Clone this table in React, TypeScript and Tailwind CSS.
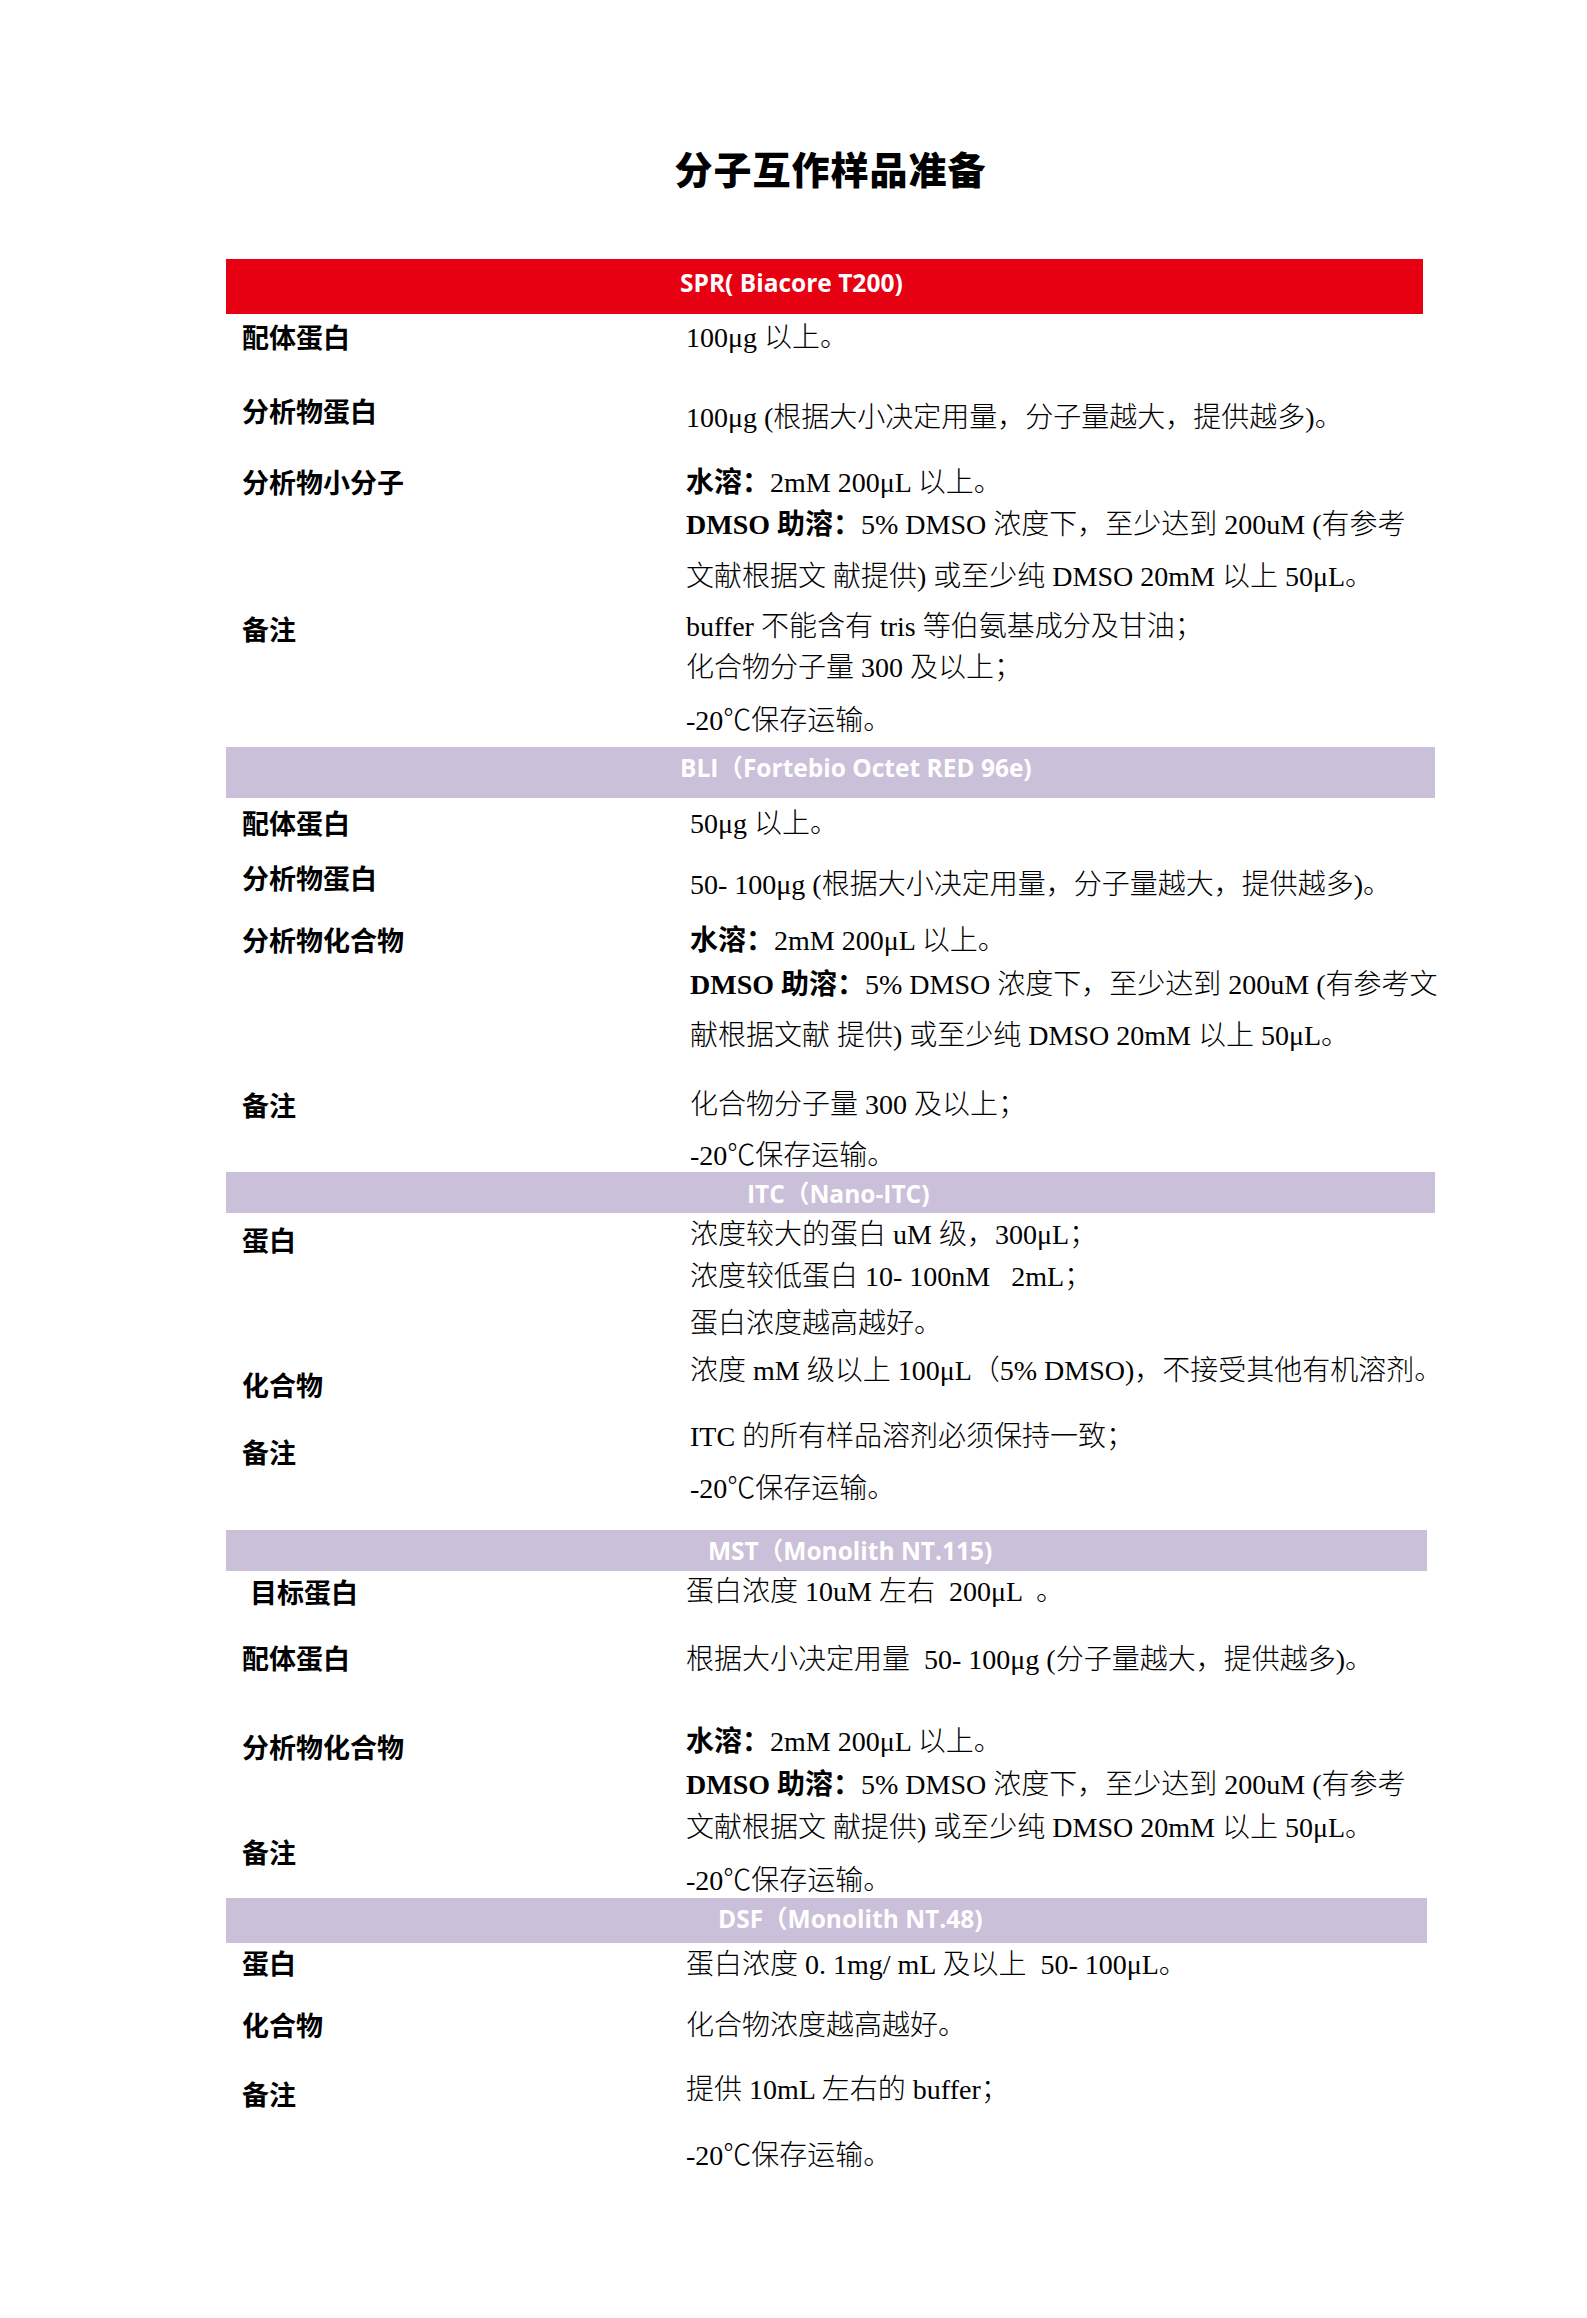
import React from "react";

type Label = { cls: string; text: string };
type Val = { cls: string; node: React.ReactNode };
type Section = {
  title: string;
  barCls: string;
  textCls: string;
  bodyCls: string;
  gridCls: string;
  labels: Label[];
  values: Val[];
};

const B = ({ children }: { children: React.ReactNode }) => (
  <span className="font-bold">{children}</span>
);

const sections: Section[] = [
  {
    title: "SPR( Biacore T200)",
    barCls: "h-[55px] w-[1197px] bg-[#e60012]",
    textCls: "pl-[454px] pb-[7px]",
    bodyCls: "h-[433px]",
    gridCls: "grid-cols-[460px_1fr]",
    labels: [
      { cls: "mt-[7px]", text: "配体蛋白" },
      { cls: "mt-[42px]", text: "分析物蛋白" },
      { cls: "mt-[39px]", text: "分析物小分子" },
      { cls: "mt-[115px]", text: "备注" },
    ],
    values: [
      { cls: "mt-[8px]", node: "100μg 以上。" },
      { cls: "mt-[48px]", node: "100μg (根据大小决定用量，分子量越大，提供越多)。" },
      { cls: "mt-[33px]", node: <><B>水溶：</B>2mM 200μL 以上。</> },
      { cls: "mt-[10px]", node: <><B>DMSO 助溶：</B>5% DMSO 浓度下，至少达到 200uM (有参考</> },
      { cls: "mt-[20px]", node: "文献根据文 献提供) 或至少纯 DMSO 20mM 以上 50μL。" },
      { cls: "mt-[18px]", node: "buffer 不能含有 tris 等伯氨基成分及甘油；" },
      { cls: "mt-[9px]", node: "化合物分子量 300 及以上；" },
      { cls: "mt-[21px]", node: "-20℃保存运输。" },
    ],
  },
  {
    title: "BLI（Fortebio Octet RED 96e)",
    barCls: "h-[51px] w-[1209px] bg-[#cbc0d9]",
    textCls: "pl-[454px] pb-[10px]",
    bodyCls: "h-[374px]",
    gridCls: "grid-cols-[464px_1fr]",
    labels: [
      { cls: "mt-[9px]", text: "配体蛋白" },
      { cls: "mt-[23px]", text: "分析物蛋白" },
      { cls: "mt-[30px]", text: "分析物化合物" },
      { cls: "mt-[133px]", text: "备注" },
    ],
    values: [
      { cls: "mt-[10px]", node: "50μg 以上。" },
      { cls: "mt-[29px]", node: "50- 100μg (根据大小决定用量，分子量越大，提供越多)。" },
      { cls: "mt-[24px]", node: <><B>水溶：</B>2mM 200μL 以上。</> },
      { cls: "mt-[12px]", node: <><B>DMSO 助溶：</B>5% DMSO 浓度下，至少达到 200uM (有参考文</> },
      { cls: "mt-[19px]", node: "献根据文献 提供) 或至少纯 DMSO 20mM 以上 50μL。" },
      { cls: "mt-[37px]", node: "化合物分子量 300 及以上；" },
      { cls: "mt-[19px]", node: "-20℃保存运输。" },
    ],
  },
  {
    title: "ITC（Nano-ITC)",
    barCls: "h-[41px] w-[1209px] bg-[#cbc0d9]",
    textCls: "pl-[521px] pt-[3px]",
    bodyCls: "h-[317px]",
    gridCls: "grid-cols-[464px_1fr]",
    labels: [
      { cls: "mt-[11px]", text: "蛋白" },
      { cls: "mt-[113px]", text: "化合物" },
      { cls: "mt-[35px]", text: "备注" },
    ],
    values: [
      { cls: "mt-[6px]", node: "浓度较大的蛋白 uM 级，300μL；" },
      { cls: "mt-[10px]", node: "浓度较低蛋白 10- 100nM   2mL；" },
      { cls: "mt-[15px]", node: "蛋白浓度越高越好。" },
      { cls: "mt-[15px]", node: "浓度 mM 级以上 100μL（5% DMSO)，不接受其他有机溶剂。" },
      { cls: "mt-[34px]", node: "ITC 的所有样品溶剂必须保持一致；" },
      { cls: "mt-[20px]", node: "-20℃保存运输。" },
    ],
  },
  {
    title: "MST（Monolith NT.115)",
    barCls: "h-[41px] w-[1201px] bg-[#cbc0d9]",
    textCls: "pl-[482px]",
    bodyCls: "h-[327px]",
    gridCls: "grid-cols-[460px_1fr]",
    labels: [
      { cls: "mt-[5px] pl-[8px]", text: "目标蛋白" },
      { cls: "mt-[34px]", text: "配体蛋白" },
      { cls: "mt-[57px]", text: "分析物化合物" },
      { cls: "mt-[73px]", text: "备注" },
    ],
    values: [
      { cls: "mt-[5px]", node: "蛋白浓度 10uM 左右  200μL  。" },
      { cls: "mt-[36px]", node: "根据大小决定用量  50- 100μg (分子量越大，提供越多)。" },
      { cls: "mt-[50px]", node: <><B>水溶：</B>2mM 200μL 以上。</> },
      { cls: "mt-[11px]", node: <><B>DMSO 助溶：</B>5% DMSO 浓度下，至少达到 200uM (有参考</> },
      { cls: "mt-[11px]", node: "文献根据文 献提供) 或至少纯 DMSO 20mM 以上 50μL。" },
      { cls: "mt-[21px]", node: "-20℃保存运输。" },
    ],
  },
  {
    title: "DSF（Monolith NT.48)",
    barCls: "h-[45px] w-[1201px] bg-[#cbc0d9]",
    textCls: "pl-[492px] pb-[3px]",
    bodyCls: "h-[260px]",
    gridCls: "grid-cols-[460px_1fr]",
    labels: [
      { cls: "mt-[4px]", text: "蛋白" },
      { cls: "mt-[30px]", text: "化合物" },
      { cls: "mt-[37px]", text: "备注" },
    ],
    values: [
      { cls: "mt-[6px]", node: "蛋白浓度 0. 1mg/ mL 及以上  50- 100μL。" },
      { cls: "mt-[29px]", node: "化合物浓度越高越好。" },
      { cls: "mt-[32px]", node: "提供 10mL 左右的 buffer；" },
      { cls: "mt-[34px]", node: "-20℃保存运输。" },
    ],
  },
];

export default function App() {
  return (
    <div className="min-h-[2318px] bg-white pl-[226px] pt-[146px] text-black">
      <div className="w-[1209px]">
        <h1 className="h-[44px] text-center font-['Noto_Sans_CJK_SC',sans-serif] text-[38px] font-black leading-[44px] tracking-[1px]">
          分子互作样品准备
        </h1>
        <div className="mt-[69px] flex flex-col">
          {sections.map((s) => (
            <section key={s.title} className="flex flex-col">
              <div className={`flex items-center ${s.barCls}`}>
                <div
                  className={`whitespace-pre font-['Open_Sans','Noto_Sans_CJK_SC',sans-serif] text-[24.5px] font-bold leading-[30px] text-white ${s.textCls}`}
                >
                  {s.title}
                </div>
              </div>
              <div className={`grid ${s.gridCls} ${s.bodyCls}`}>
                <div className="flex flex-col pl-[16px]">
                  {s.labels.map((l, i) => (
                    <div
                      key={i}
                      className={`h-[32px] whitespace-pre font-['Noto_Sans_CJK_SC',sans-serif] text-[27px] font-bold leading-[32px] ${l.cls}`}
                    >
                      {l.text}
                    </div>
                  ))}
                </div>
                <div className="flex flex-col">
                  {s.values.map((v, i) => (
                    <div
                      key={i}
                      className={`h-[32px] whitespace-pre font-['Liberation_Serif','Noto_Sans_CJK_SC',serif] text-[28px] font-light leading-[32px] ${v.cls}`}
                    >
                      {v.node}
                    </div>
                  ))}
                </div>
              </div>
            </section>
          ))}
        </div>
      </div>
    </div>
  );
}
